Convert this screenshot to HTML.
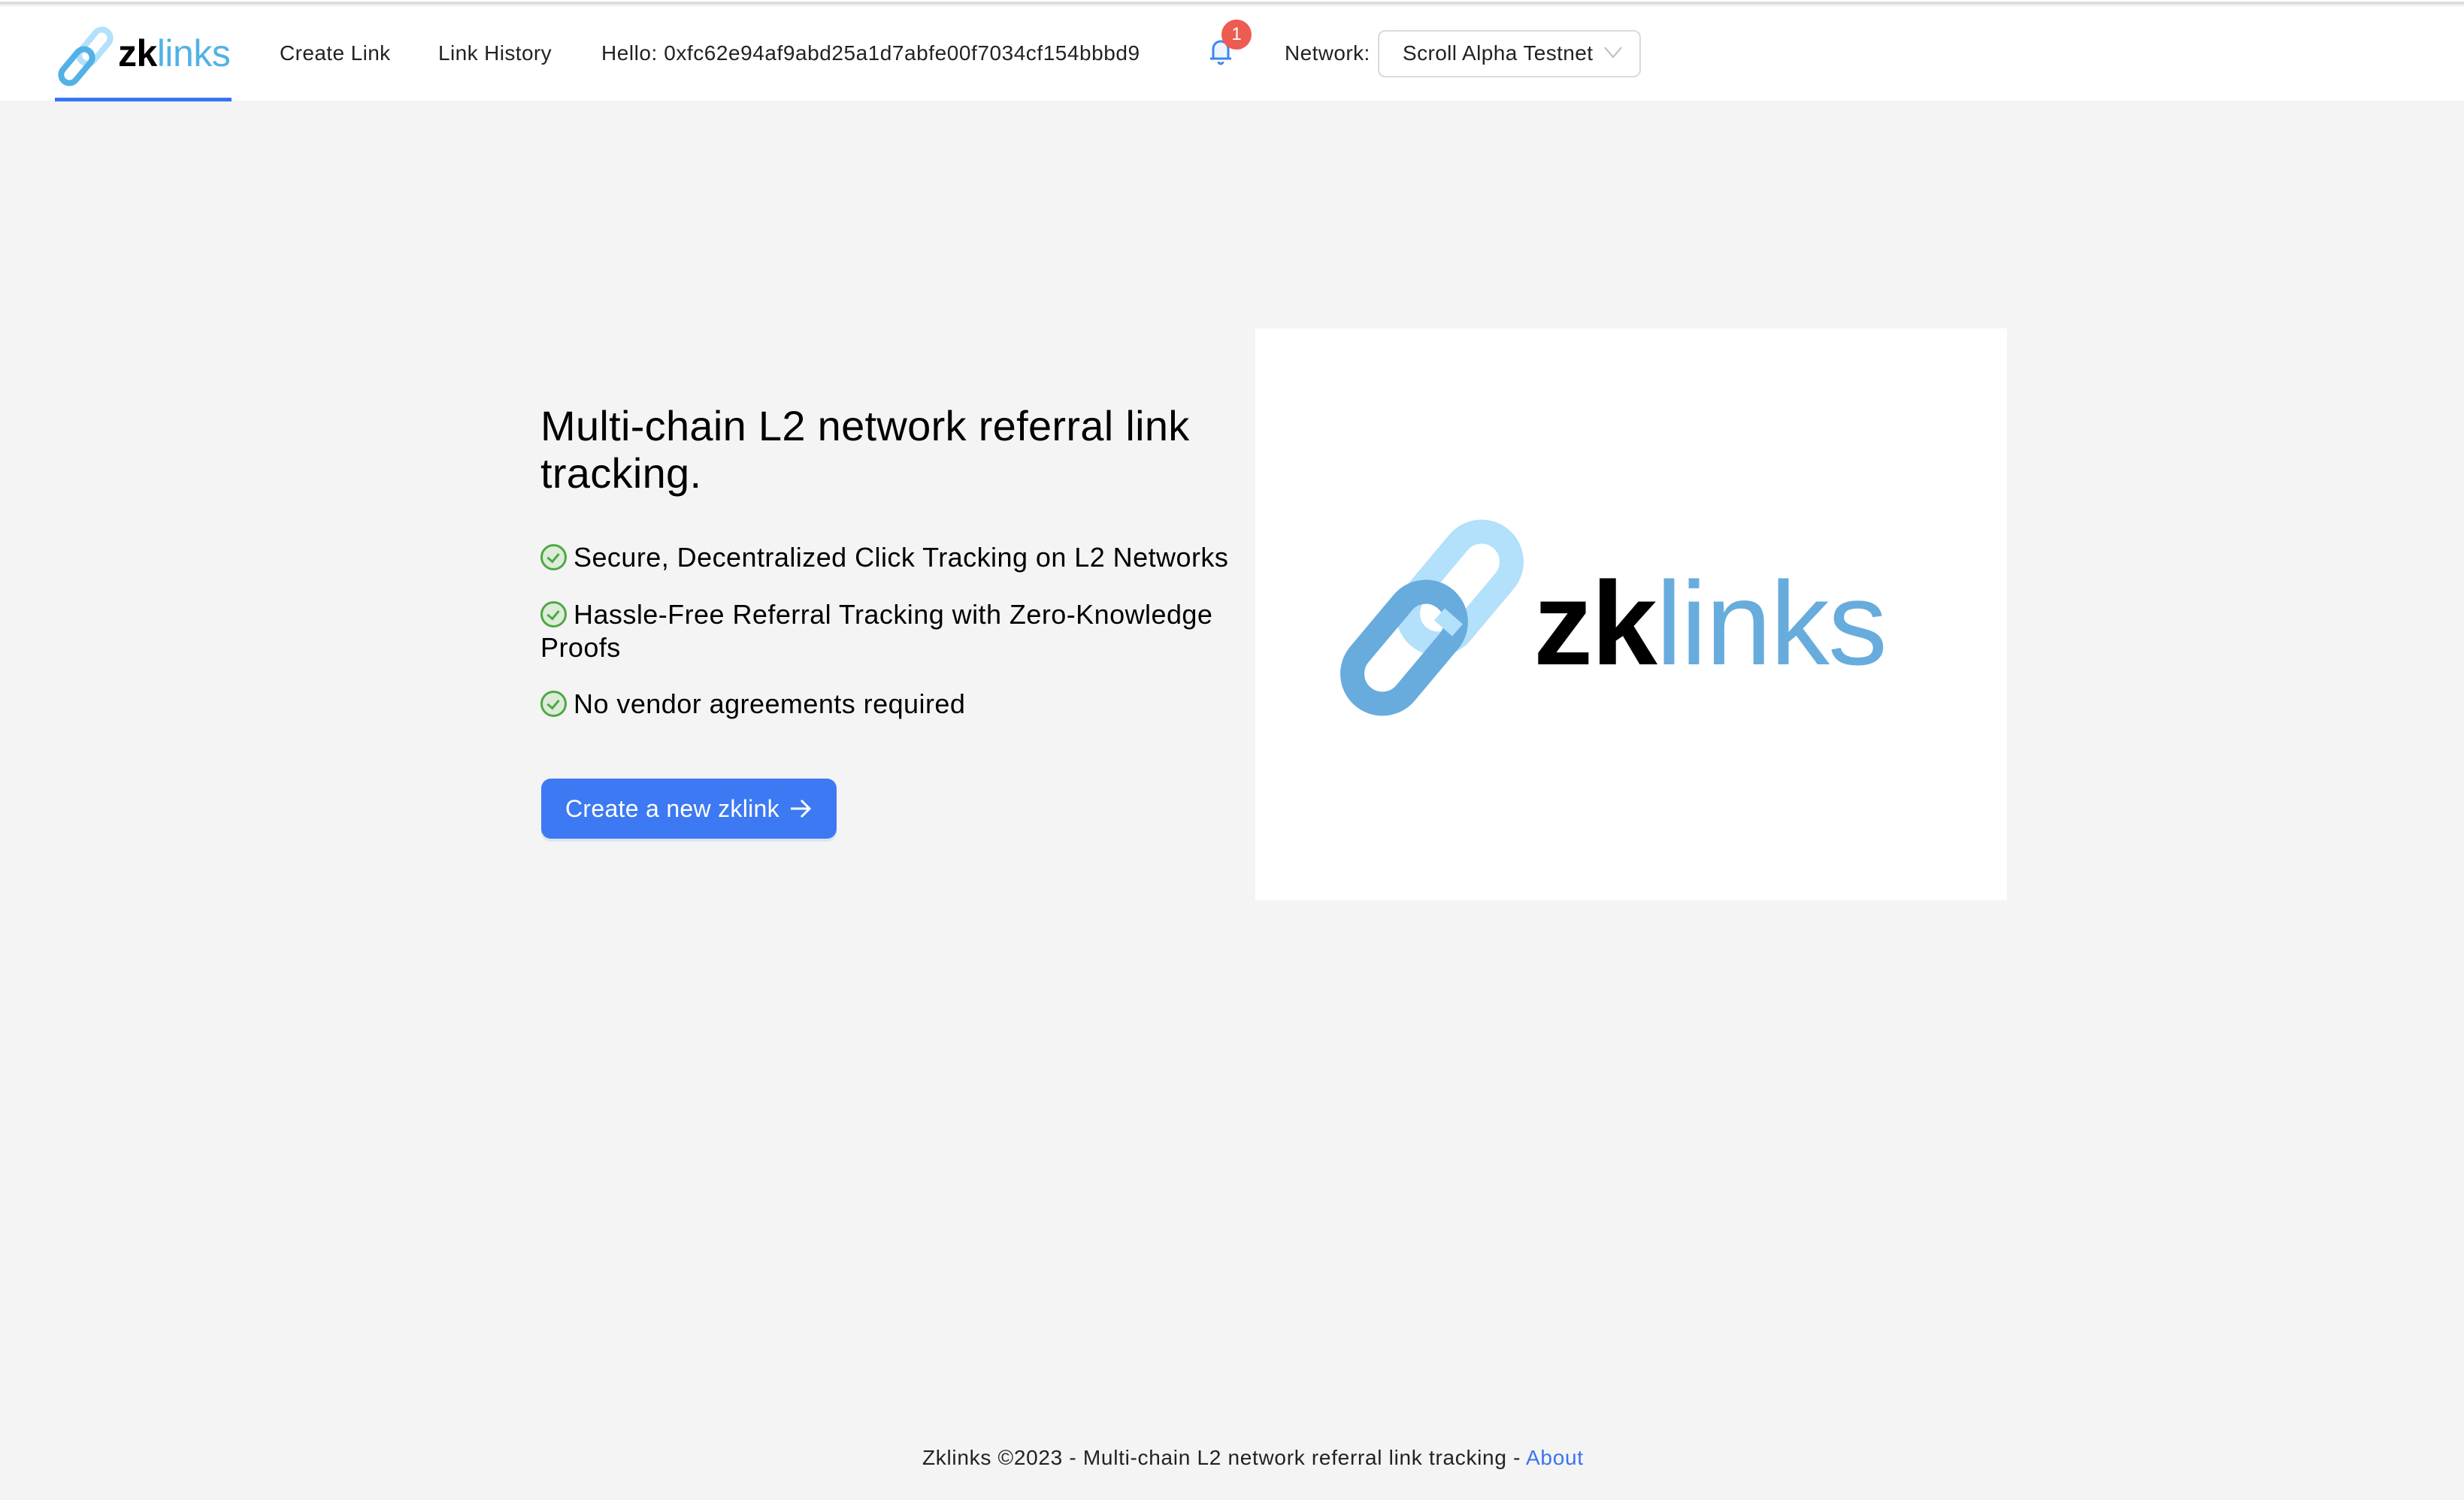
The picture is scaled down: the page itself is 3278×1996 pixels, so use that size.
<!DOCTYPE html>
<html><head><meta charset="utf-8"><style>
*{margin:0;padding:0;box-sizing:border-box}
body{width:3278px;height:1996px;background:#f4f4f4;font-family:"Liberation Sans",sans-serif;position:relative;overflow:hidden;color:#111}
.top{position:absolute;left:0;top:0;width:3278px;height:6px;background:#fff;border-bottom:4px solid #ddd}
.hdr{position:absolute;left:0;top:9px;width:3278px;height:125px;background:#fff}
.a{position:absolute;white-space:nowrap}
.nav{font-size:28px;top:55px;color:#222;letter-spacing:0.4px}
h1{position:absolute;left:719px;top:535px;font-size:56px;font-weight:normal;line-height:63px;width:940px;color:#000;letter-spacing:0.3px}
.b{position:absolute;left:719px;font-size:36px;line-height:44px;color:#000;width:960px;letter-spacing:0.45px}
.ic{display:inline-block;width:35px;height:35px;border-radius:50%;border:3px solid #4fa844;background:#dcecd8;vertical-align:-5px;margin-right:9px;position:relative}
.ic:after{content:"";position:absolute;left:9px;top:6px;width:7px;height:12px;border:solid #4fa844;border-width:0 3px 3px 0;transform:rotate(40deg)}
.btn{position:absolute;left:720px;top:1036px;width:393px;height:80px;background:#3d79f2;border-radius:13px;color:#fff;font-size:32px;line-height:80px;padding-left:32px;box-shadow:0 4px 0 rgba(61,121,242,.12);letter-spacing:0.3px}
.card{position:absolute;left:1670px;top:437px;width:1000px;height:761px;background:#fff}
</style></head><body>
<div class="top"></div>
<div class="hdr"></div>
<svg class="a" style="left:72px;top:34px" width="86" height="82" viewBox="0 0 86 82">
<rect x="-11" y="-26" width="22" height="52" rx="11" fill="none" stroke="#b3e0fb" stroke-width="8" transform="translate(54,28) rotate(40)"/>
<rect x="-11" y="-26" width="22" height="52" rx="11" fill="none" stroke="#52b1e6" stroke-width="8" transform="translate(30,54) rotate(40)"/>
</svg>
<div class="a" style="left:157px;top:42px;font-size:50px;letter-spacing:-0.5px"><span style="color:#000;font-weight:bold">zk</span><span style="color:#52b1e6">links</span></div>
<div class="a" style="left:73px;top:130px;width:235px;height:5px;background:#3874f2"></div>
<div class="a nav" style="left:372px">Create Link</div>
<div class="a nav" style="left:583px">Link History</div>
<div class="a nav" style="left:800px;letter-spacing:0.55px">Hello: 0xfc62e94af9abd25a1d7abfe00f7034cf154bbbd9</div>
<svg class="a" style="left:1604px;top:48px" width="40" height="40" viewBox="0 0 40 40"><path d="M10 30V17a10 10 0 0 1 20 0v13H10zM6 30h28M17 34a3 3 0 0 0 6 0" fill="#eef5ff" stroke="#3d86f0" stroke-width="3"/></svg>
<div class="a" style="left:1625px;top:26px;width:40px;height:40px;border-radius:50%;background:#ec5c52;color:#fff;font-size:24px;text-align:center;line-height:40px">1</div>
<div class="a nav" style="left:1709px">Network:</div>
<div class="a" style="left:1833px;top:40px;width:350px;height:63px;border:2px solid #d9d9d9;border-radius:10px;background:#fff"></div>
<div class="a nav" style="left:1866px">Scroll Alpha Testnet</div>
<svg class="a" style="left:2133px;top:60px" width="26" height="20" viewBox="0 0 26 20"><path d="M2 3l11 13L24 3" fill="none" stroke="#bbb" stroke-width="2"/></svg>

<h1>Multi-chain L2 network referral link tracking.</h1>
<div class="b" style="top:720px"><span class="ic"></span>Secure, Decentralized Click Tracking on L2 Networks</div>
<div class="b" style="top:796px"><span class="ic"></span>Hassle-Free Referral Tracking with Zero-Knowledge Proofs</div>
<div class="b" style="top:915px"><span class="ic"></span>No vendor agreements required</div>
<div class="btn">Create a new zklink<svg style="position:absolute;left:330px;top:26px" width="30" height="28" viewBox="0 0 30 28"><path d="M2 14h25M16 3l11 11-11 11" fill="none" stroke="#fff" stroke-width="3"/></svg></div>

<div class="card"></div>
<svg class="a" style="left:1770px;top:690px" width="270" height="265" viewBox="0 0 270 265">
<rect x="-40" y="-85" width="80" height="170" rx="40" fill="none" stroke="#b3e0fb" stroke-width="32" transform="translate(172,92) rotate(40)"/>
<rect x="-40" y="-85" width="80" height="170" rx="40" fill="none" stroke="#67acdd" stroke-width="32" transform="translate(98,172) rotate(40)"/>
<path d="M150 146 l14 -16" stroke="#b3e0fb" stroke-width="32"/>
</svg>
<div class="a" style="left:2040px;top:740px;font-size:158px;line-height:180px;letter-spacing:-2px"><span style="color:#000;font-weight:bold">zk</span><span style="color:#67acdd">links</span></div>

<div class="a" style="left:1227px;top:1924px;font-size:28px;color:#222;letter-spacing:0.7px">Zklinks ©2023 - Multi-chain L2 network referral link tracking - <span style="color:#3874f2">About</span></div>
</body></html>
